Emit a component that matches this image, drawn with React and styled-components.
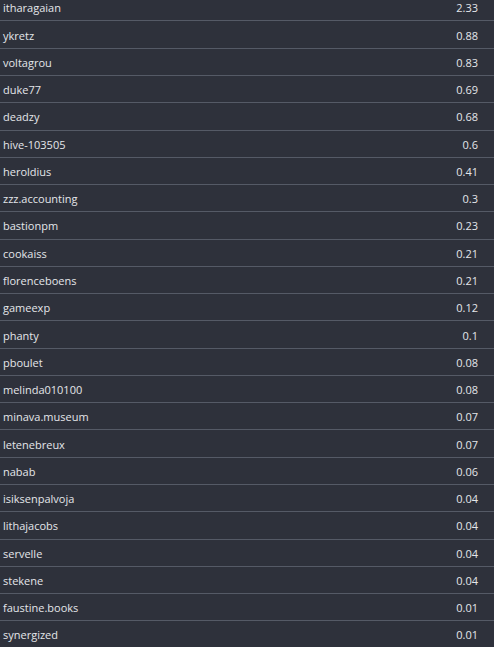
import styled, { createGlobalStyle } from 'styled-components'

const GlobalStyle = createGlobalStyle`
  html, body {
    margin: 0;
    padding: 0;
    background: #2e313b;
    overflow: hidden;
  }
`

const rows = [
  ['itharagaian', '2.33'],
  ['ykretz', '0.88'],
  ['voltagrou', '0.83'],
  ['duke77', '0.69'],
  ['deadzy', '0.68'],
  ['hive-103505', '0.6'],
  ['heroldius', '0.41'],
  ['zzz.accounting', '0.3'],
  ['bastionpm', '0.23'],
  ['cookaiss', '0.21'],
  ['florenceboens', '0.21'],
  ['gameexp', '0.12'],
  ['phanty', '0.1'],
  ['pboulet', '0.08'],
  ['melinda010100', '0.08'],
  ['minava.museum', '0.07'],
  ['letenebreux', '0.07'],
  ['nabab', '0.06'],
  ['isiksenpalvoja', '0.04'],
  ['lithajacobs', '0.04'],
  ['servelle', '0.04'],
  ['stekene', '0.04'],
  ['faustine.books', '0.01'],
  ['synergized', '0.01'],
]

const Table = styled.div`
  margin-top: -5.8px;
  font-family: 'Open Sans', 'Noto Sans', sans-serif;
  font-size: 11px;
  color: #e4e6ea;
`

const Row = styled.div`
  display: flex;
  align-items: center;
  justify-content: space-between;
  height: 25.27px;
  padding: 1px 16px 0 3px;
  border-bottom: 1px solid #555a66;
`

const Name = styled.span``

const Value = styled.span``

export default function App() {
  return (
    <>
      <GlobalStyle />
      <Table>
        {rows.map(([name, value]) => (
          <Row key={name}>
            <Name>{name}</Name>
            <Value>{value}</Value>
          </Row>
        ))}
      </Table>
    </>
  )
}
